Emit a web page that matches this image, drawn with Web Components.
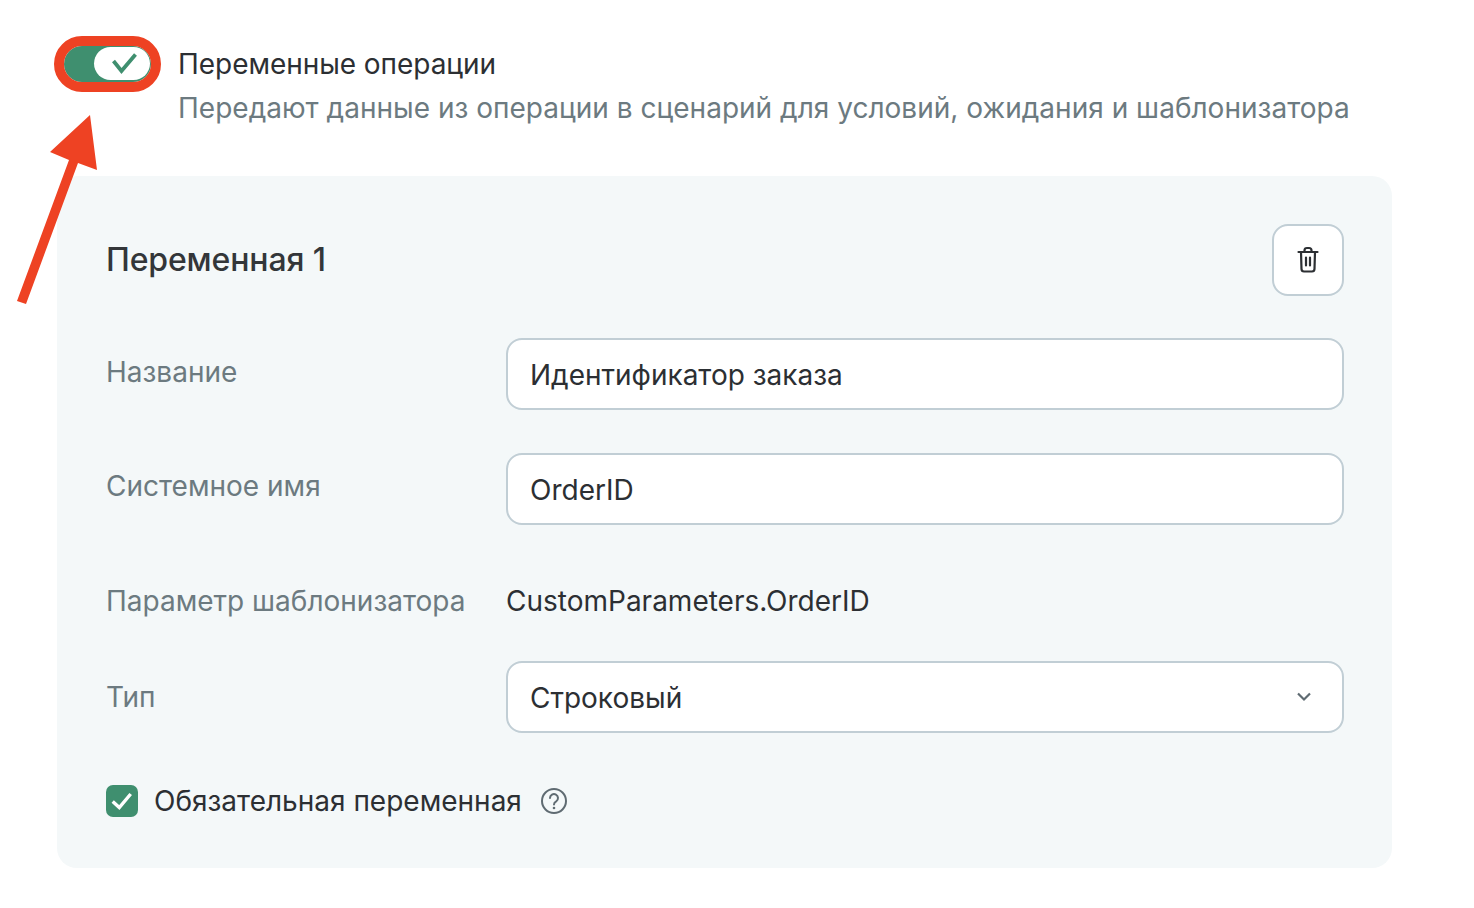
<!DOCTYPE html>
<html lang="ru">
<head>
<meta charset="utf-8">
<title>Переменные операции</title>
<style>
    html, body { margin: 0; background: #fff; }
    body { font-family: Inter, "Noto Sans", sans-serif; color: #2c2f33; }
</style>
</head>
<body>
<variables-page>
    <switch-header title-text="Переменные операции" hint="Передают данные из операции в сценарий для условий, ожидания и шаблонизатора"></switch-header>
    <variable-card heading="Переменная 1">
        <form-row label="Название"><text-box value="Идентификатор заказа"></text-box></form-row>
        <form-row label="Системное имя" style="--label-top: 15px"><text-box value="OrderID"></text-box></form-row>
        <form-row label="Параметр шаблонизатора" plain><span>CustomParameters.OrderID</span></form-row>
        <form-row label="Тип" style="--label-top: 18px; margin-bottom: 50px"><text-box value="Строковый" select></text-box></form-row>
        <check-line text="Обязательная переменная"></check-line>
    </variable-card>
</variables-page>

<script>
class VariablesPage extends HTMLElement {
    constructor(){
        super();
        this.attachShadow({mode: 'open'});
        this.shadowRoot.innerHTML = `
            <style>
                :host { display: block; position: relative; width: 1474px; height: 908px; box-sizing: border-box; padding: 46px 0 0 57px; overflow: hidden; }
                svg { position: absolute; left: 0; top: 0; }
            </style>
            <slot></slot>
            <svg width="120" height="320" viewBox="0 0 120 320">
                <path d="M90 115 L50 152 L69 160 L17 301 L26 304 L78 163 L97 170 Z" fill="#ee4223"/>
            </svg>`;
    }
}
customElements.define('variables-page', VariablesPage);

class SwitchHeader extends HTMLElement {
    constructor(){
        super();
        this.attachShadow({mode: 'open'});
        this.shadowRoot.innerHTML = `
            <style>
                :host { display: flex; gap: 27px; height: 130px; padding-left: 7px; }
                .toggle { position: relative; width: 87px; height: 36px; border-radius: 18px; background: #3f8f6f; flex: none; }
                .ring { position: absolute; inset: -10px; border: 10px solid #ee4223; border-radius: 28px; }
                .knob { position: absolute; right: 1px; top: 1px; width: 56px; height: 33px; border-radius: 17px; background: #fff; }
                .knob svg { position: absolute; left: 17px; top: 4px; }
                .title { font-size: 28px; line-height: 36px; color: #2c2f33; letter-spacing: -0.05px; }
                .hint { font-size: 28px; line-height: 36px; margin-top: 8px; color: #6c7a80; white-space: nowrap; letter-spacing: 0.015px; }
            </style>
            <div class="toggle">
                <div class="ring"></div>
                <div class="knob">
                    <svg width="28" height="24" viewBox="0 0 28 24"><path d="M2.5 10 L10.5 20 L24.5 3.5" fill="none" stroke="#3f8f6f" stroke-width="3.8"/></svg>
                </div>
            </div>
            <div>
                <div class="title"></div>
                <div class="hint"></div>
            </div>`;
        this.shadowRoot.querySelector('.title').textContent = this.getAttribute('title-text');
        this.shadowRoot.querySelector('.hint').textContent = this.getAttribute('hint');
    }
}
customElements.define('switch-header', SwitchHeader);

class VariableCard extends HTMLElement {
    constructor(){
        super();
        this.attachShadow({mode: 'open'});
        this.shadowRoot.innerHTML = `
            <style>
                :host { display: block; width: 1335px; height: 692px; box-sizing: border-box; padding: 48px 48px 0 49px; background: #f4f8f9; border-radius: 20px; }
                .head { display: flex; justify-content: space-between; align-items: center; height: 72px; margin-bottom: 42px; }
                h2 { margin: 0 0 2px; font-size: 32px; font-weight: 500; color: #333639; letter-spacing: -0.15px; }
                button { width: 72px; height: 72px; box-sizing: border-box; border: 2px solid #c1ced5; border-radius: 16px; background: #fff; padding: 0; display: flex; align-items: center; justify-content: center; }
            </style>
            <div class="head">
                <h2></h2>
                <button>
                    <svg width="24" height="28" viewBox="0 0 24 28" fill="none" stroke="#2c2f33" stroke-width="2.2" stroke-linecap="round" stroke-linejoin="round">
                        <path d="M2.5 6 H21.5 M5 6 L5.5 23 Q5.6 25.5 8 25.5 H16 Q18.4 25.5 18.5 23 L19 6 M8.5 6 V4.5 Q8.5 2 11 2 H13 Q15.5 2 15.5 4.5 V6 M10 11.5 V19.5 M14 11.5 V19.5"/>
                    </svg>
                </button>
            </div>
            <slot></slot>`;
        this.shadowRoot.querySelector('h2').textContent = this.getAttribute('heading');
    }
}
customElements.define('variable-card', VariableCard);

class FormRow extends HTMLElement {
    constructor(){
        super();
        this.attachShadow({mode: 'open'});
        this.shadowRoot.innerHTML = `
            <style>
                :host { display: grid; grid-template-columns: 400px 838px; height: 72px; margin-bottom: 43px; font-size: 28px; color: #2c2f33; }
                :host([plain]) { height: 36px; margin-top: 58px; margin-bottom: 42px; line-height: 36px; }
                .label { color: #6c7a80; line-height: 36px; padding-top: var(--label-top, 16px); white-space: nowrap; }
                :host([plain]) .label { padding-top: 0; }
            </style>
            <div class="label"></div>
            <div><slot></slot></div>`;
        this.shadowRoot.querySelector('.label').textContent = this.getAttribute('label');
    }
}
customElements.define('form-row', FormRow);

class TextBox extends HTMLElement {
    constructor(){
        super();
        this.attachShadow({mode: 'open'});
        this.shadowRoot.innerHTML = `
            <style>
                :host { display: flex; align-items: center; justify-content: space-between; height: 72px; box-sizing: border-box; padding: 0 28px 0 22px; border: 2px solid #c1ced5; border-radius: 16px; background: #fff; font-size: 28px; color: #2c2f33; }
                span { position: relative; top: 1px; }
                svg { display: none; }
                :host([select]) svg { display: block; }
            </style>
            <span></span>
            <svg width="20" height="12" viewBox="0 0 20 12"><path d="M4 2.5 L10 8.5 L16 2.5" fill="none" stroke="#5f6b72" stroke-width="2.2"/></svg>`;
        this.shadowRoot.querySelector('span').textContent = this.getAttribute('value');
    }
}
customElements.define('text-box', TextBox);

class CheckLine extends HTMLElement {
    constructor(){
        super();
        this.attachShadow({mode: 'open'});
        this.shadowRoot.innerHTML = `
            <style>
                :host { display: flex; align-items: center; height: 36px; font-size: 28px; color: #2c2f33; }
                .box { width: 32px; height: 32px; border-radius: 7px; background: #3f8f6f; display: flex; align-items: center; justify-content: center; margin-right: 16px; }
                svg.help { margin-left: 18px; }
            </style>
            <div class="box">
                <svg width="24" height="20" viewBox="0 0 24 20"><path d="M2.7 10.5 L9.3 16.5 L20.7 3" fill="none" stroke="#fff" stroke-width="3.4"/></svg>
            </div>
            <span></span>
            <svg class="help" width="28" height="28" viewBox="0 0 28 28" fill="none" stroke="#5f6b72" stroke-width="2">
                <circle cx="14" cy="14" r="12"/>
                <path d="M10 11 A4 4 0 1 1 16.2 14.4 Q14 15.6 14 17.5" stroke-linecap="round"/>
                <circle cx="14" cy="21" r="1.3" fill="#5f6b72" stroke="none"/>
            </svg>`;
        this.shadowRoot.querySelector('span').textContent = this.getAttribute('text');
    }
}
customElements.define('check-line', CheckLine);
</script>
</body>
</html>
